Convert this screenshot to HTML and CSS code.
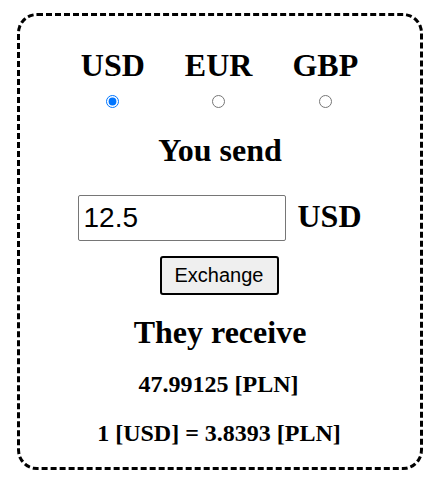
FILE: index.html
```html
<!DOCTYPE html>
<html lang="en">
<head>
<meta charset="utf-8">
<title>Currency exchange</title>
<link rel="stylesheet" href="styles.css">
</head>
<body>
<div class="card">
  <div class="currencies">
    <label class="currency">
      <span class="currency-name">USD</span>
      <input class="radio" type="radio" name="cur" value="USD" checked>
    </label>
    <label class="currency">
      <span class="currency-name">EUR</span>
      <input class="radio" type="radio" name="cur" value="EUR">
    </label>
    <label class="currency">
      <span class="currency-name">GBP</span>
      <input class="radio" type="radio" name="cur" value="GBP">
    </label>
  </div>
  <h2 class="heading send-heading">You send</h2>
  <div class="amount-row">
    <input class="amount" type="text" value="12.5">
    <span class="amount-cur">USD</span>
  </div>
  <button class="exchange" type="button">Exchange</button>
  <h2 class="heading receive-heading">They receive</h2>
  <p class="result">47.99125 [PLN]</p>
  <p class="rate">1 [USD] = 3.8393 [PLN]</p>
</div>
</body>
</html>
```

FILE: styles.css
```css
html, body {
  margin: 0;
  padding: 0;
  background: #fff;
}

body {
  font-family: "Liberation Serif", "Times New Roman", serif;
  color: #000;
}

.card {
  box-sizing: border-box;
  width: 406px;
  margin: 13px 0 0 17px;
  border: 3px dashed #000;
  border-radius: 20px;
  padding: 31px 0 20px;
  display: flex;
  flex-direction: column;
  align-items: center;
}

.currencies {
  display: flex;
  gap: 40px;
  margin-left: -1px;
}

.currency {
  display: flex;
  flex-direction: column;
  align-items: center;
}

.currency-name {
  font-size: 32px;
  font-weight: bold;
  line-height: 36px;
}

.radio {
  width: 13px;
  height: 13px;
  margin: 12px 0 0;
}

.heading {
  font-size: 32px;
  font-weight: bold;
  line-height: 36px;
  margin: 0;
}

.send-heading {
  margin-top: 24px;
}

.amount-row {
  margin-top: 27px;
  display: flex;
  align-items: baseline;
  gap: 11px;
}

.amount {
  box-sizing: border-box;
  width: 208px;
  height: 46px;
  margin: 0;
  padding: 1px 4px;
  border: 1px solid #767676;
  border-radius: 2px;
  font-family: "Liberation Sans", Arial, sans-serif;
  font-size: 28px;
  color: #000;
}

.amount-cur {
  font-size: 32px;
  font-weight: bold;
  line-height: 36px;
}

.exchange {
  box-sizing: border-box;
  width: 119px;
  height: 39px;
  margin: 15px 0 0 -2px;
  padding: 0;
  border: 2px solid #000;
  border-radius: 3px;
  background: #efefef;
  font-family: "Liberation Sans", Arial, sans-serif;
  font-size: 20px;
  color: #000;
}

.receive-heading {
  margin-top: 19px;
}

.result,
.rate {
  margin: 0;
  font-size: 24px;
  font-weight: bold;
  line-height: 27px;
}

.result {
  margin-top: 21px;
  margin-left: -3px;
}

.rate {
  margin-top: 22px;
  margin-left: -2px;
}
```
